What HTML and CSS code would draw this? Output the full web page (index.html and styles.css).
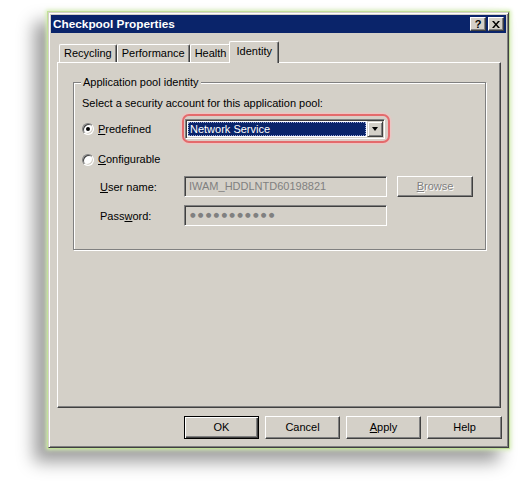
FILE: index.html
```html
<!DOCTYPE html>
<html>
<head>
<meta charset="utf-8">
<link rel="stylesheet" href="styles.css">
</head>
<body>
<div class="window">
  <div class="titlebar">
    <span class="title">Checkpool Properties</span>
    <div class="tbtns">
      <span class="tbtn help">?</span>
      <span class="tbtn close"><svg width="8" height="7" viewBox="0 0 8 7"><path d="M0 0h2l2 2.5L6 0h2L5 3.5 8 7H6L4 4.5 2 7H0l3-3.5z" fill="#000"/></svg></span>
    </div>
  </div>
  <div class="content">
    <div class="tabs">
      <div class="tab">Recycling</div>
      <div class="tab">Performance</div>
      <div class="tab">Health</div>
      <div class="tab active">Identity</div>
    </div>
    <div class="panel">
      <div class="group">
        <span class="caption">Application pool identity</span>
        <div class="lead">Select a security account for this application pool:</div>
        <div class="row row-pre">
          <div class="radio-label"><span class="radio checked"></span><span><u>P</u>redefined</span></div>
          <div class="hl">
            <div class="select">
              <div class="sel-val">Network Service</div>
              <div class="arrow"><span class="tri"></span></div>
            </div>
          </div>
        </div>
        <div class="row row-conf">
          <div class="radio-label"><span class="radio"></span><span><u>C</u>onfigurable</span></div>
        </div>
        <div class="row row-field">
          <span class="flabel"><u>U</u>ser name:</span>
          <div class="textbox">IWAM_HDDLNTD60198821</div>
          <div class="btn disabled browse"><span><u>B</u>rowse</span></div>
        </div>
        <div class="row row-field row-pw">
          <span class="flabel">Pass<u>w</u>ord:</span>
          <div class="textbox pw">●●●●●●●●●●●</div>
        </div>
      </div>
    </div>
    <div class="buttons">
      <div class="btn default"><span>OK</span></div>
      <div class="btn"><span>Cancel</span></div>
      <div class="btn"><span><u>A</u>pply</span></div>
      <div class="btn"><span>Help</span></div>
    </div>
  </div>
</div>
</body>
</html>
```
FILE: styles.css
```css
* { box-sizing: border-box; }
html, body { margin: 0; padding: 0; background: #fff; }
body {
  font-family: "Liberation Sans", Arial, sans-serif;
  font-size: 11px;
  color: #000;
  width: 524px;
  height: 494px;
  overflow: hidden;
  padding-top: 12px;
}
u { text-decoration: underline; text-underline-offset: 1px; }

.window {
  width: 461px;
  height: 436px;
  margin-left: 48px;
  background: #d4d0c8;
  border: 1px solid;
  border-color: #d4d0c8 #404040 #404040 #d4d0c8;
  box-shadow: inset 1px 1px 0 #fff, inset -1px -1px 0 #808080,
    0 0 0 1px #c2e09a, 0 0 4px 2px #d6efb3,
    -12px 12px 16px 2px rgba(0, 0, 0, 0.38);
  padding: 2px;
  display: flex;
  flex-direction: column;
}

.titlebar {
  height: 18px;
  background: #0a246a;
  display: flex;
  align-items: center;
  justify-content: space-between;
  padding: 0 2px 0 2px;
}
.title {
  color: #fff;
  font-weight: bold;
  font-size: 11.8px;
  line-height: 18px;
}
.tbtns { display: flex; gap: 2px; }
.tbtn {
  width: 16px;
  height: 14px;
  background: #d4d0c8;
  border: 1px solid;
  border-color: #fff #404040 #404040 #fff;
  box-shadow: inset -1px -1px 0 #808080;
  display: flex;
  align-items: center;
  justify-content: center;
  font-weight: bold;
  font-size: 11px;
  line-height: 12px;
}

.content {
  flex: 1;
  display: flex;
  flex-direction: column;
  padding: 8px 5px 0 6px;
}

.tabs {
  height: 21px;
  display: flex;
  align-items: flex-end;
  padding-left: 2px;
}
.tab {
  height: 18px;
  padding: 0 4px 0 4px;
  line-height: 16px;
  border-top: 1px solid #fff;
  border-left: 1px solid #fff;
  border-right: 1px solid #404040;
  box-shadow: inset -1px 0 0 #808080;
  border-radius: 2px 2px 0 0;
  background: #d4d0c8;
}
.tab.active {
  height: 22px;
  margin: 0 -2px -1px -2px;
  padding: 0 6px 0 6px;
  line-height: 18px;
  position: relative;
  z-index: 1;
}

.panel {
  height: 346px;
  border: 1px solid;
  border-color: #fff #404040 #404040 #fff;
  box-shadow: inset -1px -1px 0 #808080;
  padding-top: 19px;
}

.group {
  position: relative;
  margin: 0 14px 0 15px;
  height: 168px;
  border: 1px solid #808080;
  box-shadow: 1px 1px 0 #fff, inset 1px 1px 0 #fff;
  padding: 14px 0 0 8px;
}
.caption {
  position: absolute;
  top: -7px;
  left: 7px;
  padding: 0 2px;
  background: #d4d0c8;
  line-height: 13px;
}
.lead { line-height: 13px; }

.row { display: flex; align-items: center; }
.row-pre { margin-top: 3px; height: 30px; }
.radio-label {
  width: 100px;
  display: flex;
  align-items: center;
  gap: 4px;
  line-height: 13px;
  padding-top: 2px;
}
.radio {
  width: 12px;
  height: 12px;
  border-radius: 50%;
  background: #fff;
  border: 1px solid;
  border-color: #808080 #fff #fff #808080;
  box-shadow: inset 1px 1px 0 #404040, inset -1px -1px 0 #d4d0c8;
  display: flex;
  align-items: center;
  justify-content: center;
}
.radio.checked::after {
  content: "";
  width: 4px;
  height: 4px;
  border-radius: 50%;
  background: #000;
}

.hl {
  border: 2px solid #e46a6c;
  border-radius: 7px;
  padding: 3px 3px 2px 1px;
  box-shadow: 0 0 2px 1px #f6c0c0, inset 0 0 2px #f6c0c0;
}
.select {
  width: 200px;
  height: 20px;
  border: 1px solid;
  border-color: #808080 #fff #fff #808080;
  box-shadow: inset 1px 1px 0 #404040, inset -1px -1px 0 #d4d0c8;
  background: #fff;
  padding: 2px 2px 2px 2px;
  display: flex;
}
.sel-val {
  flex: 1;
  background: #0a246a;
  color: #fff;
  border: 1px dotted #9aa6d6;
  line-height: 12px;
  padding-left: 1px;
  margin-right: 1px;
}
.arrow {
  width: 16px;
  margin: -1px -1px -1px 0;
  background: #d4d0c8;
  border: 1px solid;
  border-color: #d4d0c8 #404040 #404040 #d4d0c8;
  box-shadow: inset 1px 1px 0 #fff, inset -1px -1px 0 #808080;
  display: flex;
  align-items: center;
  justify-content: center;
}
.tri {
  width: 0;
  height: 0;
  border-left: 3.5px solid transparent;
  border-right: 3.5px solid transparent;
  border-top: 4px solid #000;
}

.row-conf { margin-top: 7px; height: 17px; }
.row-field { margin-top: 9px; height: 21px; padding-left: 18px; }
.row-pw { margin-top: 8px; }
.flabel { width: 84px; }
.textbox {
  width: 203px;
  height: 21px;
  border: 1px solid;
  border-color: #808080 #fff #fff #808080;
  box-shadow: inset 1px 1px 0 #404040, inset -1px -1px 0 #d4d0c8;
  color: #808080;
  line-height: 19px;
  padding-left: 4px;
}
.textbox.pw {
  font-family: "DejaVu Sans", sans-serif;
  font-size: 6.5px;
  letter-spacing: 2.2px;
  padding-left: 5px;
}

.btn {
  width: 75px;
  height: 23px;
  background: #d4d0c8;
  border: 1px solid;
  border-color: #fff #404040 #404040 #fff;
  box-shadow: inset -1px -1px 0 #808080;
  display: flex;
  align-items: center;
  justify-content: center;
  line-height: 13px;
}
.btn.default {
  border: 1px solid #000;
  box-shadow: inset 1px 1px 0 #fff, inset -1px -1px 0 #404040, inset -2px -2px 0 #808080;
}
.btn.disabled { color: #808080; text-shadow: 1px 1px 0 #fff; }
.browse { width: 76px; height: 21px; margin-left: 10px; }

.buttons {
  display: flex;
  justify-content: flex-end;
  gap: 6px;
  margin-top: 8px;
  margin-right: -1px;
}
```
